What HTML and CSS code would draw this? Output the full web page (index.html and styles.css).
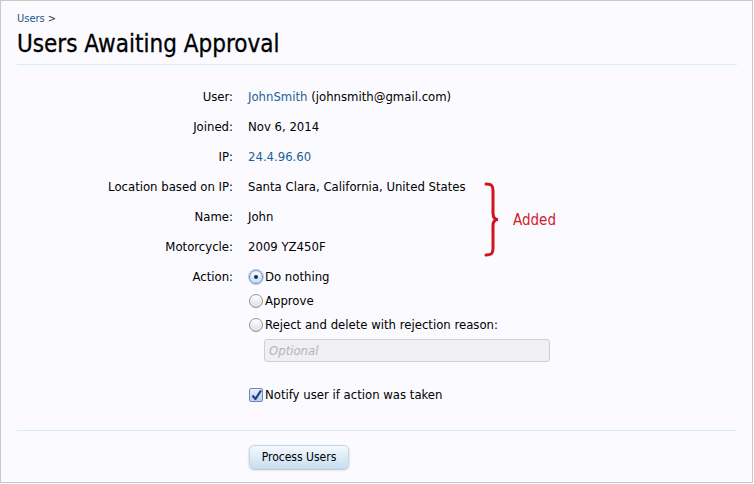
FILE: index.html
```html
<!DOCTYPE html>
<html>
<head>
<meta charset="utf-8">
<link rel="stylesheet" href="styles.css">
</head>
<body>
<div class="page">
  <div class="crumbs"><a class="crumb" href="#">Users</a> &gt;</div>
  <h1 class="title">Users Awaiting Approval</h1>
  <div class="form">
    <div class="row"><div class="label">User:</div><div class="value"><a class="link" href="#">JohnSmith</a> (johnsmith@gmail.com)</div></div>
    <div class="row"><div class="label">Joined:</div><div class="value">Nov 6, 2014</div></div>
    <div class="row"><div class="label">IP:</div><div class="value"><a class="link" href="#">24.4.96.60</a></div></div>
    <div class="added-group">
      <div class="row"><div class="label">Location based on IP:</div><div class="value">Santa Clara, California, United States</div></div>
      <div class="row"><div class="label">Name:</div><div class="value">John</div></div>
      <div class="row"><div class="label">Motorcycle:</div><div class="value">2009 YZ450F</div></div>
      <div class="annotation">
        <svg class="brace" width="16" height="75" viewBox="0 0 16 75"><path d="M2 2 C8 2 9 4 9 9 L9 31 C9 35 10 37.5 14 37.5 C10 37.5 9 40 9 44 L9 66 C9 71 8 73 2 73" fill="none" stroke="#d0151c" stroke-width="3" stroke-linecap="round"/></svg>
        <span class="added">Added</span>
      </div>
    </div>
    <div class="row action-row">
      <div class="label">Action:</div>
      <div class="value choices">
        <div class="choice"><span class="radio checked"></span>Do nothing</div>
        <div class="choice"><span class="radio"></span>Approve</div>
        <div class="choice"><span class="radio"></span>Reject and delete with rejection reason:</div>
        <div class="reason"><span class="placeholder">Optional</span></div>
        <div class="choice notify"><span class="checkbox"><svg width="11" height="11" viewBox="0 0 11 11"><path d="M1.5 5.5 L4.5 9 L10 0.5" fill="none" stroke="#1d3f8a" stroke-width="2.2" stroke-linejoin="round"/></svg></span>Notify user if action was taken</div>
      </div>
    </div>
  </div>
  <div class="submit-bar">
    <div class="submit-cell"><button class="button">Process Users</button></div>
  </div>
</div>
</body>
</html>
```
FILE: styles.css
```css
html, body {
  margin: 0;
  padding: 0;
  background: #ffffff;
}
.page {
  height: 481px;
  border: 1px solid #c8c8c8;
  background: #fafaff;
  font-family: "DejaVu Sans Condensed", "DejaVu Sans", sans-serif;
  font-size: 13px;
  color: #000;
  padding: 0 15px 0 16px;
  box-sizing: content-box;
  width: 720px;
}
.crumbs {
  padding-top: 11px;
  font-size: 11px;
  line-height: 14px;
  color: #333;
}
.crumb {
  color: #22578a;
  text-decoration: none;
}
.title {
  margin: 4px 0 0;
  font-size: 24px;
  font-weight: normal;
  line-height: 28px;
  padding-bottom: 6px;
  border-bottom: 1px solid #d7ebfa;
  color: #000;
  -webkit-text-stroke: 0.3px #000;
}
.form {
  padding-top: 17px;
}
.row {
  display: grid;
  grid-template-columns: 216px 1fr;
  column-gap: 15px;
  line-height: 18px;
  padding: 6px 0;
}
.label {
  text-align: right;
  color: #000;
}
.link {
  color: #1e5f96;
  text-decoration: none;
}
.added-group {
  position: relative;
}
.annotation {
  position: absolute;
  left: 467px;
  top: 10px;
  display: flex;
  align-items: center;
  gap: 13px;
}
.added {
  color: #d0202a;
  font-size: 15px;
  font-family: "DejaVu Sans Condensed", "DejaVu Sans", sans-serif;
}
.choices {
  display: flex;
  flex-direction: column;
  gap: 6px;
}
.choice {
  display: flex;
  align-items: center;
  gap: 2px;
  margin-left: 1px;
}
.radio {
  width: 12px;
  height: 12px;
  border-radius: 50%;
  border: 1px solid #8f8f8f;
  background: linear-gradient(#ffffff, #e0e0e0);
  box-sizing: content-box;
  display: inline-flex;
  align-items: center;
  justify-content: center;
}
.radio.checked {
  border-color: #6c8fc0;
  background: linear-gradient(#f4f8ff, #c9dcf4);
  box-shadow: 0 0 0 1px #b9cdee;
}
.radio.checked::after {
  content: "";
  width: 4px;
  height: 4px;
  border-radius: 50%;
  background: #1b2f55;
}
.reason {
  margin-left: 16px;
  margin-top: -1px;
  width: 280px;
  height: 21px;
  border: 1px solid #cfcfcf;
  border-radius: 3px;
  background: #f0f0f3;
  display: flex;
  align-items: center;
  padding-left: 4px;
  box-sizing: content-box;
}
.placeholder {
  color: #b4b4b8;
  font-style: oblique;
}
.notify {
  margin-top: 18px;
}
.checkbox {
  width: 12px;
  height: 12px;
  border: 1px solid #6f86b0;
  border-radius: 2px;
  background: linear-gradient(#e8f0fb, #bcd0ee);
  display: inline-flex;
  align-items: flex-end;
  justify-content: center;
  box-sizing: content-box;
}
.submit-bar {
  margin-top: 20px;
  border-top: 1px solid #d7ebfa;
  padding-top: 14px;
  display: grid;
  grid-template-columns: 216px 1fr;
  column-gap: 15px;
}
.submit-cell {
  grid-column: 2;
}
.button {
  width: 100px;
  height: 24px;
  border: 1px solid #c5d6e6;
  border-radius: 5px;
  background: linear-gradient(#f4f9fd, #c7def2);
  box-shadow: 0 1px 2px rgba(0,0,0,0.25);
  font-family: "DejaVu Sans Condensed", "DejaVu Sans", sans-serif;
  font-size: 12px;
  color: #000;
  padding: 0;
  margin-left: 1px;
}
```
